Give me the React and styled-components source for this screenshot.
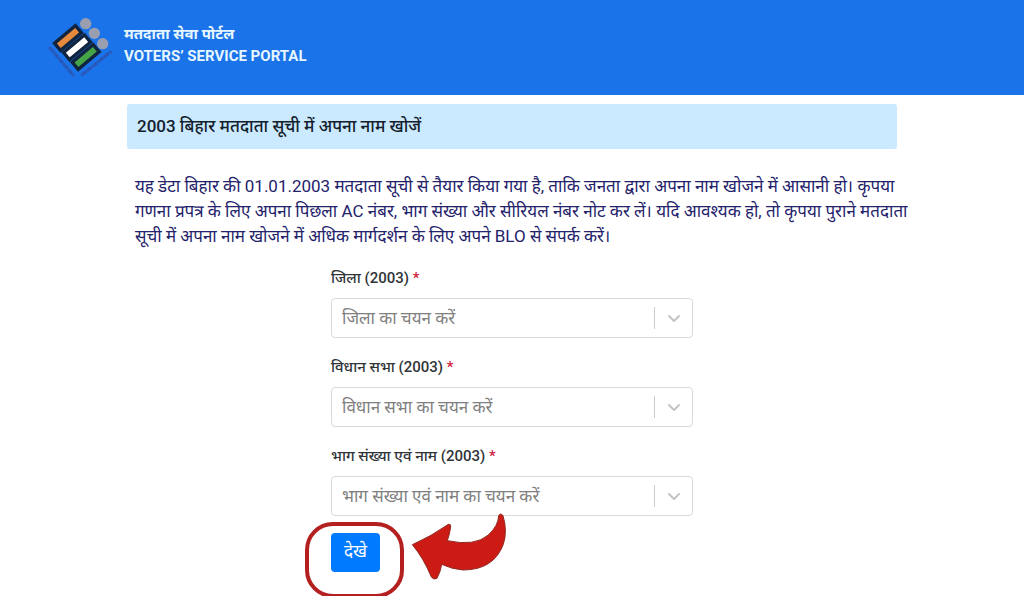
import React from "react";
import styled, { createGlobalStyle } from "styled-components";

// Global styles for the page
const GlobalStyles = createGlobalStyle`
  * {
    box-sizing: border-box;
  }

  body {
    margin: 0;
    background: #fff;
    color: #303438;
    font-family: Roboto, "Noto Sans Devanagari", "Noto Sans", sans-serif;
  }
`;

const Header = styled.header`
  display: flex;
  align-items: center;
  gap: 12px;
  height: 95px;
  padding: 0 48px;
  background: #1a73e8;
`;

const Logo = styled.svg`
  width: 64px;
  height: 64px;
  flex: none;
`;

const Brand = styled.div`
  display: flex;
  flex-direction: column;
  padding-bottom: 6px;
  color: #e6f6ff;
  font-size: 15px;
  font-weight: 700;
  line-height: 22px;
`;

const Page = styled.main`
  width: calc(100% - 32px);
  max-width: 770px;
  margin: 0 auto;
  padding: 9px 0 24px;
`;

const Title = styled.h1`
  margin: 0;
  padding: 0 10px;
  border-radius: 3px;
  background: #cbeaff;
  color: #14202c;
  font-size: 17px;
  font-weight: 500;
  line-height: 45px;
`;

const Notice = styled.p`
  margin: 25px -16px 0 0;
  padding: 0 0 0 8px;
  color: #24226a;
  font-size: 17px;
  line-height: 25px;
`;

const Form = styled.form`
  display: flex;
  flex-direction: column;
  gap: 17px;
  width: 100%;
  max-width: 362px;
  margin: 20px auto 0;
`;

const Fields = styled.div`
  display: flex;
  flex-direction: column;
  gap: 20px;
`;

const Field = styled.div`
  display: flex;
  flex-direction: column;
  gap: 11px;
`;

const Label = styled.label`
  font-size: 15px;
  font-weight: 500;
  line-height: 18px;
`;

const Required = styled.span`
  color: #d0213c;
`;

const SelectBox = styled.div`
  display: grid;
  grid-template-columns: 1fr auto;
  align-items: center;
`;

const Select = styled.select`
  grid-area: 1 / 1 / 2 / 3;
  width: 100%;
  height: 40px;
  padding: 0 48px 0 10px;
  appearance: none;
  border: 1px solid #d9d9d9;
  border-radius: 4px;
  background: #fff;
  color: #808080;
  font-family: inherit;
  font-size: 17px;
`;

const Indicator = styled.span`
  grid-area: 1 / 2;
  display: flex;
  align-items: center;
  height: 22px;
  padding: 0 11px;
  border-left: 1px solid #ccc;
  pointer-events: none;
`;

const Actions = styled.div`
  position: relative;
  align-self: flex-start;
`;

const Submit = styled.button`
  display: block;
  height: 39px;
  padding: 0 13px;
  border: 0;
  border-radius: 4px;
  background: #007bff;
  color: #fff;
  font-family: inherit;
  font-size: 17px;
`;

// Hand-drawn marks that point at the button
const Ring = styled.span`
  position: absolute;
  top: -11px;
  left: -26px;
  width: 99px;
  height: 76px;
  border: 4px solid #b3201f;
  border-radius: 28px;
  pointer-events: none;
`;

const Arrow = styled.svg`
  position: absolute;
  top: -20px;
  left: 80px;
  width: 96px;
  height: 68px;
  pointer-events: none;
`;

const fields = [
  { id: "district", label: "जिला (2003)", placeholder: "जिला का चयन करें" },
  { id: "assembly", label: "विधान सभा (2003)", placeholder: "विधान सभा का चयन करें" },
  { id: "part", label: "भाग संख्या एवं नाम (2003)", placeholder: "भाग संख्या एवं नाम का चयन करें" },
];

const stripes = [
  { x: 84, y: 84, color: "#e58a3c" },
  { x: 111, y: 112, color: "#ffffff" },
  { x: 137, y: 141, color: "#45a447" },
];

const CommissionLogo = () => (
  <Logo viewBox="24 18 192 192" aria-hidden="true">
    {stripes.map(({ x, y, color }) => (
      <g key={color} transform={`translate(${x} ${y}) rotate(-40)`}>
        <rect x="-46" y="-19" width="92" height="38" fill="#10243f" />
        <rect x="-36" y="-9" width="72" height="18" fill={color} />
      </g>
    ))}
    <circle cx="137" cy="41" r="17" fill="#9a9fb0" />
    <circle cx="163" cy="70" r="17" fill="#9a9fb0" />
    <circle cx="188" cy="101" r="17" fill="#9a9fb0" />
    <path
      d="M28 112L102 198M124 196L214 124"
      fill="none"
      stroke="#2d51ad"
      strokeWidth="9"
      strokeDasharray="5 2 8 2 3 2"
    />
  </Logo>
);

const SelectField = ({ id, label, placeholder }) => (
  <Field>
    <Label htmlFor={id}>
      {label} <Required>*</Required>
    </Label>
    <SelectBox>
      <Select id={id} name={id} defaultValue="">
        <option value="">{placeholder}</option>
      </Select>
      <Indicator>
        <svg width="16" height="16" viewBox="0 0 16 16" aria-hidden="true">
          <path
            d="M3 6l5 5 5-5"
            fill="none"
            stroke="#c4c4c4"
            strokeWidth="2"
            strokeLinecap="round"
            strokeLinejoin="round"
          />
        </svg>
      </Indicator>
    </SelectBox>
  </Field>
);

const App = () => {
  return (
    <>
      <GlobalStyles />
      <Header>
        <CommissionLogo />
        <Brand>
          <span>मतदाता सेवा पोर्टल</span>
          <span>VOTERS’ SERVICE PORTAL</span>
        </Brand>
      </Header>
      <Page>
        <Title>2003 बिहार मतदाता सूची में अपना नाम खोजें</Title>
        <Notice>
          यह डेटा बिहार की 01.01.2003 मतदाता सूची से तैयार किया गया है, ताकि जनता द्वारा अपना नाम
          खोजने में आसानी हो। कृपया गणना प्रपत्र के लिए अपना पिछला AC नंबर, भाग संख्या और सीरियल
          नंबर नोट कर लें। यदि आवश्यक हो, तो कृपया पुराने मतदाता सूची में अपना नाम खोजने में अधिक
          मार्गदर्शन के लिए अपने BLO से संपर्क करें।
        </Notice>
        <Form onSubmit={(e) => e.preventDefault()}>
          <Fields>
            {fields.map((field) => (
              <SelectField key={field.id} {...field} />
            ))}
          </Fields>
          <Actions>
            <Submit type="submit">देखे</Submit>
            <Ring />
            <Arrow viewBox="364 248 288 204" aria-hidden="true">
              <path
                d="M368 343Q425 318 476 282Q484 280 483 290Q480 312 473 331Q556 349 596 314Q626 286 627 256Q633 246 640 256Q654 302 641 342Q612 419 520 419Q485 416 456 402Q453 424 442 444Q432 450 425 440Q402 384 368 343Z"
                fill="#cc1a14"
                stroke="#8f2a22"
                strokeWidth="3"
                strokeLinejoin="round"
              />
            </Arrow>
          </Actions>
        </Form>
      </Page>
    </>
  );
};

export default App;
